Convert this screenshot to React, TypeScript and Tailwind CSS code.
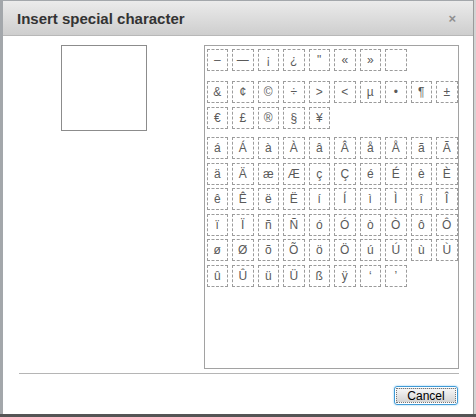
import React from "react";

const rows: { chars: string[]; mt: string }[] = [
  { chars: ["–", "—", "¡", "¿", "\"", "«", "»", "\u00a0"], mt: "mt-0" },
  { chars: ["&", "¢", "©\uFE0E", "÷", ">", "<", "µ", "•", "¶", "±"], mt: "mt-[10px]" },
  { chars: ["€", "£", "®\uFE0E", "§", "¥"], mt: "mt-[3.6px]" },
  { chars: ["á", "Á", "à", "À", "â", "Â", "å", "Å", "ã", "Ã"], mt: "mt-[8.4px]" },
  { chars: ["ä", "Ä", "æ", "Æ", "ç", "Ç", "é", "É", "è", "È"], mt: "mt-[3.6px]" },
  { chars: ["ê", "Ê", "ë", "Ë", "í", "Í", "ì", "Ì", "î", "Î"], mt: "mt-[3.6px]" },
  { chars: ["ï", "Ï", "ñ", "Ñ", "ó", "Ó", "ò", "Ò", "ô", "Ô"], mt: "mt-[3.6px]" },
  { chars: ["ø", "Ø", "õ", "Õ", "ö", "Ö", "ú", "Ú", "ù", "Ù"], mt: "mt-[3.6px]" },
  { chars: ["û", "Û", "ü", "Ü", "ß", "ÿ", "‘", "’"], mt: "mt-[3.6px]" },
];

export default function App() {
  return (
    <div className="relative w-[476px] h-[417px] bg-[#a3a7ab] pt-px pl-[3px] font-['Liberation_Sans',Arial,sans-serif]">
      <div className="w-[470px] h-[413px] flex flex-col bg-white">
        {/* Title bar */}
        <div className="h-[35px] shrink-0 flex items-center justify-between pl-[14px] pr-[17px] bg-gradient-to-b from-[#ebebeb] to-[#cecece] border-b border-[#b8b8b8]">
          <h1 className="text-[15px] font-bold text-[#333] leading-none">
            Insert special character
          </h1>
          <span className="text-[13px] font-bold text-[#8f8f8f] leading-none">×</span>
        </div>

        {/* Body */}
        <div className="flex-1 flex flex-col pl-[16px] pr-[14px] pt-[9px]">
          <div className="flex">
            <div className="w-[185px] pl-[42px]">
              <div className="w-[86px] h-[86px] border border-[#8c8c8c]" />
            </div>
            <div className="w-[255px] h-[324px] border border-[#a2a2a2] pl-[1.5px] pt-[3px]">
              {rows.map((row, i) => (
                <div key={i} className={`flex gap-[4px] ${row.mt}`}>
                  {row.chars.map((c, j) => (
                    <div
                      key={j}
                      className="w-[21.5px] h-[22px] shrink-0 flex items-center justify-center border border-dashed border-[#9c9c9c] text-[12px] leading-none text-[#5a5a5a] [font-variant-emoji:text]"
                    >
                      {c}
                    </div>
                  ))}
                </div>
              ))}
            </div>
          </div>

          <div className="mt-[4px] h-px bg-[#b5b5b5]" />

          <div className="flex justify-end mt-[12px] pr-px">
            <button className="w-[64px] h-[19px] rounded-[3px] border border-[#3f9ad6] shadow-[0_0_2px_#7cc0ee] p-px">
              <span className="w-full h-full flex items-center justify-center bg-gradient-to-b from-[#f6f6f6] to-[#d4d4d4] border border-dotted border-[#777] text-[12px] leading-none text-black">
                Cancel
              </span>
            </button>
          </div>
        </div>
      </div>
      <div className="absolute left-0 top-[414px] w-[476px] h-[3px] bg-[#555]" />
      <div className="absolute left-[473px] top-0 w-[3px] h-[414px] bg-[#d4d4d4] border-l border-[#9a9a9a]" />
    </div>
  );
}
